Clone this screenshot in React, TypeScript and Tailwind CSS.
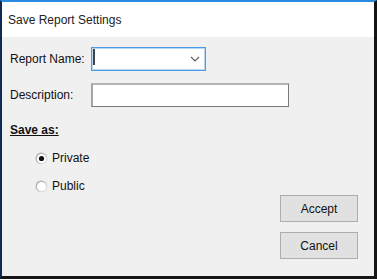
import React from "react";

function Radio({ checked }: { checked: boolean }) {
  return (
    <svg width="13" height="13" viewBox="0 0 13 13" className="shrink-0">
      <defs>
        <linearGradient id={checked ? "rg1" : "rg2"} x1="0" y1="0" x2="1" y2="1">
          <stop offset="0" stopColor="#9a9a9a" />
          <stop offset="1" stopColor="#f4f4f4" />
        </linearGradient>
      </defs>
      <circle cx="6.5" cy="6.5" r="6" fill={`url(#${checked ? "rg1" : "rg2"})`} />
      <circle cx="6.5" cy="6.5" r="4.6" fill="#ffffff" />
      {checked && <circle cx="6.5" cy="6.5" r="2.6" fill="#111111" />}
    </svg>
  );
}

export default function App() {
  const font = { fontFamily: '"Liberation Sans", Arial, sans-serif' };
  return (
    <div
      className="w-[377px] h-[279px] flex flex-col border-l-2 border-t-2 border-r-[3px] border-b-[3px] border-l-[#0f2a55] border-t-[#2a8ae2] border-r-[#151515] border-b-[#151515] bg-[#f0f0f0] text-[12px] text-[#111]"
      style={font}
    >
      <div className="h-[35px] bg-white flex items-center pl-[6px] text-[12px] text-[#222]">
        Save Report Settings
      </div>
      <div className="flex-1 flex flex-col pl-[8px] pr-[16px]">
        <div className="mt-[10px] h-[24px] flex items-center">
          <div className="w-[81px]">Report Name:</div>
          <div className="relative w-[115px] h-[24px] bg-white border border-[#4b9be6] shadow-[inset_0_0_0_1px_#b5d6f5] flex items-center justify-end pr-[5px]">
            <div className="absolute left-[1px] top-[1px] w-[1.5px] h-[16px] bg-[#444]" />
            <svg width="10" height="6" viewBox="0 0 10 6">
              <path d="M1 1 L5 5 L9 1" fill="none" stroke="#606060" strokeWidth="1.2" />
            </svg>
          </div>
        </div>
        <div className="mt-[12px] h-[24px] flex items-center">
          <div className="w-[81px]">Description:</div>
          <div className="w-[198px] h-[24px] bg-white border-l-2 border-t-2 border-r border-b border-l-[#a4a4a4] border-t-[#b4b4b4] border-r-[#7a7a7a] border-b-[#7a7a7a]" />
        </div>
        <div className="mt-[16px] h-[14px] flex items-center">
          <span className="font-bold underline">Save as:</span>
        </div>
        <div className="mt-[13px] h-[16px] flex items-center pl-[25px] gap-[4px]">
          <Radio checked />
          <span>Private</span>
        </div>
        <div className="mt-[12px] h-[16px] flex items-center pl-[25px] gap-[4px]">
          <Radio checked={false} />
          <span>Public</span>
        </div>
        <div className="mt-[1px] flex flex-col items-end gap-[10px]">
          <button className="w-[78px] h-[27px] bg-[#e1e1e1] border border-[#adadad] text-[12px] text-[#111]">
            Accept
          </button>
          <button className="w-[78px] h-[27px] bg-[#e1e1e1] border border-[#adadad] text-[12px] text-[#111]">
            Cancel
          </button>
        </div>
      </div>
    </div>
  );
}
